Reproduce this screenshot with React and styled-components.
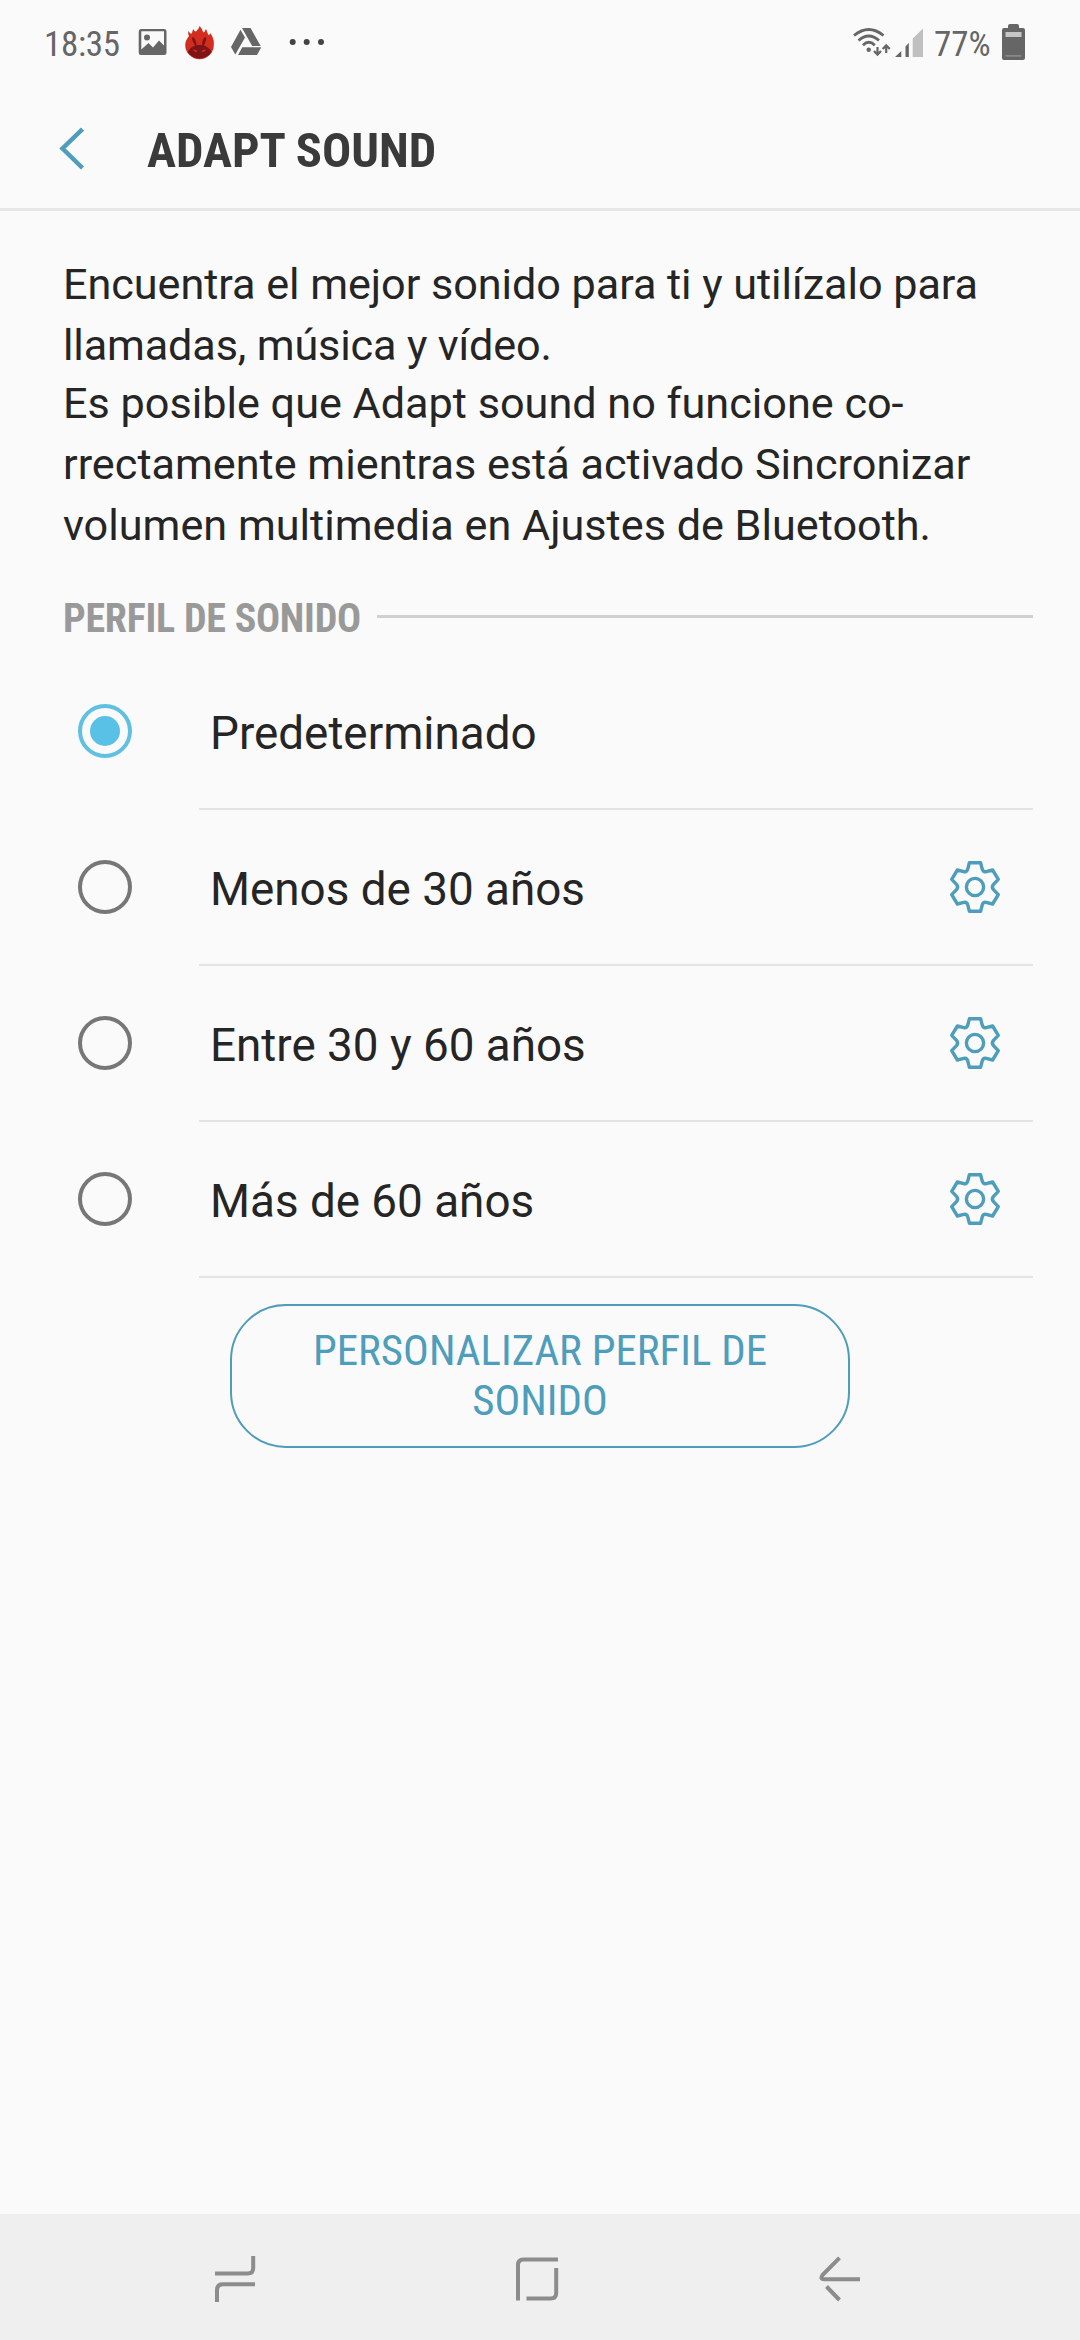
import React from "react";
import styled, { createGlobalStyle } from "styled-components";

const GlobalStyle = createGlobalStyle`
  * { box-sizing: border-box; }
  body { margin: 0; background: #fafafa; font-family: Roboto, sans-serif; }
`;

const accent = "#4d9dbb";

const Screen = styled.div`
  width: 1080px;
  height: 2340px;
  display: flex;
  flex-direction: column;
  background: #fafafa;
  color: #252525;
  overflow: hidden;
`;

const Condensed = styled.span`
  font-family: "Roboto Condensed", Roboto, sans-serif;
  font-stretch: 75%;
  white-space: nowrap;
`;

const StatusBar = styled.header`
  height: 88px;
  flex: none;
  display: flex;
  justify-content: space-between;
  padding: 0 54px 0 44px;
  color: #666;
`;

const StatusGroup = styled.div`
  display: flex;
  align-items: flex-start;
`;

const StatusText = styled(Condensed)`
  width: ${(p) => p.$width}px;
  padding-top: 24px;
  font-size: 35px;
  line-height: 41px;
  letter-spacing: ${(p) => p.$tracking || 0}px;
`;

const StatusIcon = styled.svg`
  width: ${(p) => p.$width}px;
  height: 88px;
  flex: none;
`;

const TitleBar = styled.div`
  height: 123px;
  flex: none;
  display: flex;
  align-items: flex-start;
  border-bottom: 3px solid #e7e7e7;
`;

const BackButton = styled.button`
  width: 147px;
  height: 120px;
  padding: 0;
  border: 0;
  background: none;
`;

const Title = styled(Condensed).attrs({ as: "h1" })`
  margin: 34px 0 0;
  font-size: 48.6px;
  line-height: 58px;
  font-weight: 700;
  color: #3a3a3a;
`;

const Description = styled.section`
  padding: 43px 0 0 63px;
  height: 375px;
  flex: none;
  font-size: 43.2px;
  line-height: 61px;
`;

const Paragraph = styled.p`
  margin: 0 0 ${(p) => p.$gap || 0}px;
  white-space: nowrap;
`;

const Line = styled.span`
  display: block;
  letter-spacing: ${(p) => p.$tracking || 0}px;
`;

const SectionHeader = styled.div`
  height: 66px;
  flex: none;
  display: flex;
  align-items: center;
  padding: 0 47px 0 63px;
`;

const SectionTitle = styled(Condensed).attrs({ as: "h2" })`
  margin: 0;
  width: 314px;
  font-size: 40px;
  line-height: 48px;
  letter-spacing: -0.25px;
  font-weight: 700;
  color: #999;
`;

const SectionRule = styled.div`
  flex: 1;
  height: 3px;
  margin-bottom: 5px;
  background: #d0d0d0;
`;

const Options = styled.div`
  flex: none;
  padding-top: 2px;
`;

const Option = styled.div`
  display: flex;
  height: 156px;
  padding: 0 47px 0 78px;
`;

const Radio = styled.span`
  display: flex;
  align-items: center;
  justify-content: center;
  width: 54px;
  height: 54px;
  margin: 50px 67px 0 0;
  border: 4px solid ${(p) => (p.$checked ? "#5fc0e2" : "#777")};
  border-radius: 50%;
  flex: none;

  &::after {
    content: "";
    width: 30px;
    height: 30px;
    border-radius: 50%;
    background: ${(p) => (p.$checked ? "#59c1e6" : "transparent")};
  }
`;

const OptionBody = styled.div`
  flex: 1;
  display: flex;
  justify-content: space-between;
  padding: 0 33px 0 11px;
  border-bottom: 2px solid #e4e4e4;
`;

const OptionLabel = styled.span`
  padding-top: 53px;
  font-size: 45.8px;
  line-height: 54px;
  white-space: nowrap;
`;

const GearSvg = styled.svg`
  width: 50px;
  height: 54px;
  margin-top: 50px;
  overflow: visible;
`;

const CustomButton = styled.button`
  align-self: center;
  flex: none;
  width: 620px;
  height: 144px;
  margin-top: 26px;
  padding: 0 0 2px;
  border: 2px solid ${accent};
  border-radius: 56px;
  background: transparent;
  color: ${accent};
  font-size: 42.9px;
  line-height: 50px;
`;

const NavBar = styled.nav`
  height: 126px;
  flex: none;
  margin-top: auto;
  display: flex;
  background: #efefef;
`;

const NavIcon = styled.svg`
  width: ${(p) => p.$width}px;
  height: 126px;
  fill: none;
  stroke: #8c8c8c;
  stroke-width: 4;
`;

function Gear() {
  return (
    <GearSvg viewBox="950 860 50 54" fill="none" stroke={accent} strokeWidth="3.4" strokeLinejoin="round">
      <circle cx="975" cy="887" r="8.6" />
      <path d="M969.400 862.700H980.600L982.300 869.300Q983.300 872.300 986.200 871.600L992.600 870L998.300 879.400L993.700 884.100Q991 887 993.700 889.900L998.300 894.600L992.600 904L986.200 902.400Q983.300 901.700 982.300 904.700L980.600 911.300H969.400L967.700 904.700Q966.700 901.700 963.800 902.400L957.400 904L951.700 894.600L956.300 889.900Q959 887 956.300 884.100L951.700 879.400L957.400 870L963.800 871.600Q966.700 872.300 967.700 869.300Z" />
    </GearSvg>
  );
}

const options = [
  { label: "Predeterminado", checked: true },
  { label: "Menos de 30 años", editable: true },
  { label: "Entre 30 y 60 años", editable: true },
  { label: "Más de 60 años", editable: true },
];

export default function App() {
  return (
    <Screen>
      <GlobalStyle />
      <StatusBar>
        <StatusGroup>
          <StatusText $width={86} $tracking={-0.3}>18:35</StatusText>
          <StatusIcon $width={200} viewBox="130 0 200 88">
            <path fill="#666" fillRule="evenodd" d="M141 29H164Q166.500 29 166.500 31.500V52.500Q166.500 55 164 55H141Q138.700 55 138.700 52.500V31.500Q138.700 29 141 29ZM141.300 31.200V49.500L148.500 43L153 47.500L159 40.500L164 45.500V31.200Z" />
            <circle cx="147" cy="37.500" r="3" fill="#666" />
            <path fill="#d32d20" d="M189 36C188 34 188 32 188.500 31C189.500 33 191 34 191.500 33.500C193 32 192 30 193.500 29C194 31 195.500 32 196.500 31C198 29.500 199 28 199.500 26C202 28 202.500 31 203.500 32.500C205 32 205 30 206 29C207 31 207.500 33.500 208.500 35C209.500 35 210 34 210 33C214 38 214 42 213.800 45A14.300 14.300 0 1 1 185.200 45C185.200 41 187 39 189 36Z" />
            <path fill="#7c1419" d="M187.800 52C190 48 193 46 195.200 45.500C193 42 191.500 39 192.200 37.500C194.500 36.500 196 41 196.800 45.200C198.500 45 200 45 202 45.200C202.500 41 203.500 36.500 205.800 37.500C207 39 205.500 42 204 45.500C207 46.500 210 49 211.500 52A14 14 0 0 1 187.800 52Z" />
            <path d="M193.500 50L197 51.500M205.500 50L202 51.500" stroke="#d32d20" strokeWidth="1.500" />
            <path fill="#666" d="M242 28H250.500L260.700 46H252.200ZM240.500 29.800L245 37.500L235.300 54.500L231 47ZM242.300 47.300H261.300L257 55H238Z" />
            <g fill="#444">
              <circle cx="292.700" cy="42" r="3" /><circle cx="306.700" cy="42" r="3" /><circle cx="321" cy="42" r="3" />
            </g>
          </StatusIcon>
        </StatusGroup>
        <StatusGroup>
          <StatusIcon $width={84} viewBox="850 0 84 88">
            <g fill="none" stroke="#666" strokeWidth="2.800">
              <path d="M854 35.500Q868.700 23.500 883.500 35.500M858.500 40.500Q868.700 31.500 879 40.500M863 45.200Q868.700 39.500 874.800 45.200" />
              <path d="M877.500 47V54M874 51L877.500 54.700L881 51M886.200 53V46M882.700 49L886.200 45.300L889.700 49" strokeWidth="2.200" />
            </g>
            <circle cx="868.700" cy="49.700" r="2.200" fill="#666" />
            <path fill="#666" d="M895 57L901.300 51V57ZM905.500 46.500L908.800 43V57H905.500Z" />
            <path fill="#c0c0c0" d="M912.700 38.500L923 28.500V57H912.700Z" />
          </StatusIcon>
          <StatusText $width={62}>77%</StatusText>
          <StatusIcon $width={30} viewBox="996 0 30 88">
            <path fill="#666" d="M1008 28V26Q1008 24 1010 24H1017Q1019 24 1019 26V28H1023Q1025 28 1025 30V58Q1025 60 1023 60H1004Q1002 60 1002 58V30Q1002 28 1004 28Z" />
            <path fill="#c6c6c6" d="M1005.500 32H1021.500V37H1005.500Z" />
            <path fill="#999" d="M1005.500 55.300H1021.500V56.500H1005.500Z" />
          </StatusIcon>
        </StatusGroup>
      </StatusBar>

      <TitleBar>
        <BackButton aria-label="Atrás">
          <svg width="147" height="120" viewBox="0 88 147 120" fill="none" stroke={accent} strokeWidth="4.400">
            <path d="M82.500 129.200L62.500 148.500L82.500 168" />
          </svg>
        </BackButton>
        <Title>ADAPT SOUND</Title>
      </TitleBar>

      <Description>
        <Paragraph $gap={-3}>
          <Line $tracking={-0.05}>Encuentra el mejor sonido para ti y utilízalo para</Line>
          <Line $tracking={-0.15}>llamadas, música y vídeo.</Line>
        </Paragraph>
        <Paragraph>
          <Line>Es posible que Adapt sound no funcione co-</Line>
          <Line>rrectamente mientras está activado Sincronizar</Line>
          <Line>volumen multimedia en Ajustes de Bluetooth.</Line>
        </Paragraph>
      </Description>

      <SectionHeader>
        <SectionTitle>PERFIL DE SONIDO</SectionTitle>
        <SectionRule />
      </SectionHeader>

      <Options role="radiogroup">
        {options.map((o) => (
          <Option key={o.label}>
            <Radio role="radio" aria-checked={!!o.checked} $checked={o.checked} />
            <OptionBody>
              <OptionLabel>{o.label}</OptionLabel>
              {o.editable && <Gear />}
            </OptionBody>
          </Option>
        ))}
      </Options>

      <CustomButton>
        <Condensed>
          PERSONALIZAR PERFIL DE<br />SONIDO
        </Condensed>
      </CustomButton>

      <NavBar>
        <NavIcon $width={386} viewBox="0 2214 386 126">
          <path d="M253.200 2256V2268Q253.200 2273.600 247.500 2273.600H215M217 2302V2290Q217 2284.200 223 2284.200H255" />
        </NavIcon>
        <NavIcon $width={308} viewBox="386 2214 308 126">
          <path d="M518 2300.500V2265Q518 2259.500 523.500 2259.500H558M556.200 2268V2293Q556.200 2298.500 550.500 2298.500H526.500" />
        </NavIcon>
        <NavIcon $width={386} viewBox="694 2214 386 126">
          <path d="M839.500 2257.800L822.500 2275Q819.800 2279.200 824 2279.200H860M826.500 2286.500L839.500 2300" />
        </NavIcon>
      </NavBar>
    </Screen>
  );
}
